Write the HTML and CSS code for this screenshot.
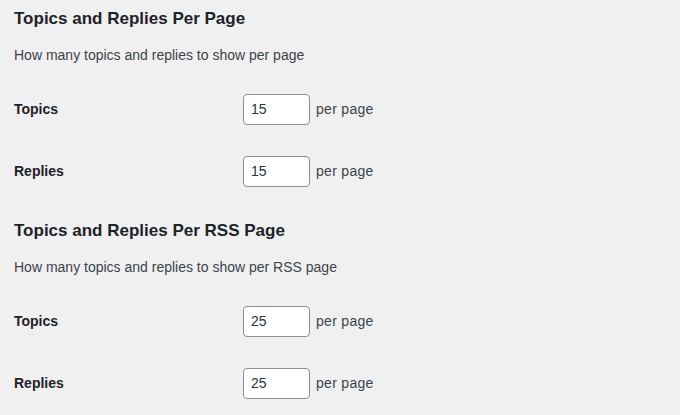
FILE: index.html
```html
<!DOCTYPE html>
<html>
<head>
<meta charset="utf-8">
<link rel="stylesheet" href="styles.css">
</head>
<body>
<div class="page">
  <section class="section">
    <h2 class="title">Topics and Replies Per Page</h2>
    <p class="desc">How many topics and replies to show per page</p>
    <div class="row">
      <label class="label">Topics</label>
      <div class="field"><input class="num" type="text" value="15"><span class="unit">per page</span></div>
    </div>
    <div class="row">
      <label class="label">Replies</label>
      <div class="field"><input class="num" type="text" value="15"><span class="unit">per page</span></div>
    </div>
  </section>
  <section class="section">
    <h2 class="title">Topics and Replies Per RSS Page</h2>
    <p class="desc">How many topics and replies to show per RSS page</p>
    <div class="row">
      <label class="label">Topics</label>
      <div class="field"><input class="num" type="text" value="25"><span class="unit">per page</span></div>
    </div>
    <div class="row">
      <label class="label">Replies</label>
      <div class="field"><input class="num" type="text" value="25"><span class="unit">per page</span></div>
    </div>
  </section>
</div>
</body>
</html>
```
FILE: styles.css
```css
html, body {
  margin: 0;
  padding: 0;
  background: #f0f0f1;
}
body {
  font-family: "Liberation Sans", Arial, sans-serif;
  color: #1d2327;
  font-size: 13px;
}
.page {
  padding: 7px 14px 0 14px;
  display: flex;
  flex-direction: column;
  gap: 17px;
}
.section {
  display: flex;
  flex-direction: column;
}
.title {
  margin: 0 0 14px 0;
  font-size: 17px;
  line-height: 24px;
  font-weight: 600;
  color: #1d2327;
}
.desc {
  margin: 0 0 13px 0;
  font-size: 14px;
  line-height: 20px;
  color: #3c434a;
}
.row {
  height: 62px;
  display: grid;
  grid-template-columns: 229px 1fr;
  align-items: center;
}
.label {
  font-size: 14px;
  font-weight: 600;
  color: #1d2327;
}
.field {
  display: flex;
  align-items: center;
  gap: 6px;
}
.num {
  box-sizing: border-box;
  width: 67px;
  height: 31px;
  margin: 0;
  padding: 0 7px;
  border: 1px solid #8c8f94;
  border-radius: 4px;
  background: #fff;
  color: #2c3338;
  font-family: "Liberation Sans", Arial, sans-serif;
  font-size: 14px;
  outline: none;
}
.unit {
  font-size: 14px;
  letter-spacing: 0.3px;
  color: #3c434a;
}
```
